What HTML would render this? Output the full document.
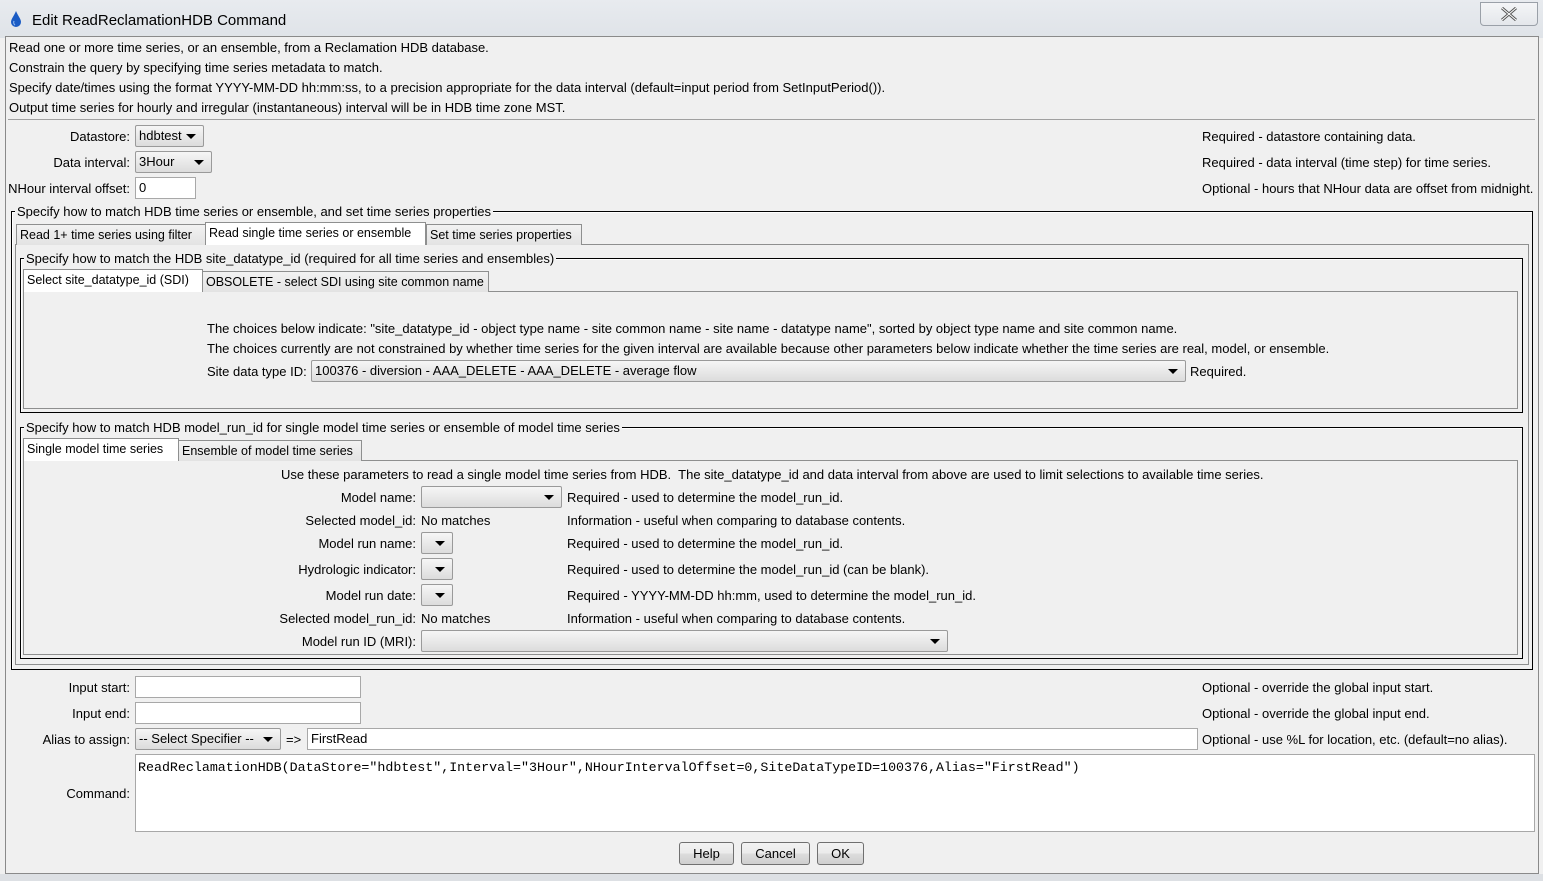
<!DOCTYPE html>
<html><head><meta charset="utf-8"><style>
*{box-sizing:border-box;margin:0;padding:0}
body{width:1543px;height:881px;overflow:hidden;background:#f0f0f0;font-family:"Liberation Sans",sans-serif;font-size:13px;color:#000;position:relative}
.a{position:absolute}
.t{position:absolute;white-space:nowrap;line-height:14px;margin-top:1px}
.r{text-align:right}
.cb{position:absolute;height:22px;border:1px solid #9a9a9a;border-radius:2px;background:linear-gradient(#f6f6f6,#dcdcdc);line-height:20px;padding-left:3px;white-space:nowrap}
.cb:after{content:"";position:absolute;right:7px;top:8px;border-left:5px solid transparent;border-right:5px solid transparent;border-top:5px solid #000}
.tf{position:absolute;height:22px;border:1px solid #a8a8a8;background:#fff;line-height:20px;padding-left:3px;white-space:nowrap}
.tab{position:absolute;height:21px;border:1px solid #8e8f8f;border-bottom:none;background:linear-gradient(#f2f2f2,#e3e3e3);line-height:21px;padding:0 3px;white-space:nowrap;font-size:12.5px;overflow:hidden}
.tab.s{background:#fff;height:23px;line-height:20px}
.grp{position:absolute;border:1px solid #000;box-shadow:inset 1px 1px 0 #fff}
.pan{position:absolute;border:1px solid #8e8f8f}
.lg{position:absolute;background:#f0f0f0;padding:0 2px;line-height:15px;white-space:nowrap}
.btn{position:absolute;height:23px;border:1px solid #707070;border-radius:3px;background:linear-gradient(#f2f2f2 0%,#ebebeb 50%,#dddddd 51%,#cfcfcf 100%);text-align:center;line-height:21px}
</style></head><body>
<div class="a" style="left:0;top:0;width:1543px;height:38px;background:linear-gradient(#e8ebef,#dfe3e8)"></div>
<svg class="a" style="left:9px;top:10px" width="14" height="18" viewBox="0 0 14 18"><path d="M7 1 C5 6 2 9 2 12 A5 5 0 0 0 12 12 C12 9 9 6 7 1Z" fill="#1a5bc4"/><path d="M5 11 A2.5 3 0 0 0 6 15" stroke="#8fb8f0" stroke-width="1.2" fill="none"/></svg>
<div class="t" style="left:32px;top:12px;font-size:15px;line-height:16px">Edit ReadReclamationHDB Command</div>
<div class="a" style="left:1480px;top:2px;width:58px;height:24px;border:1px solid #9aa0a8;border-radius:0 0 4px 4px;background:linear-gradient(#f4f5f7,#e4e7eb)"></div>
<svg class="a" style="left:1500px;top:7px" width="18" height="14" viewBox="0 0 18 14"><path d="M2 1 L16 13 M16 1 L2 13" stroke="#555" stroke-width="3"/><path d="M2 1 L16 13 M16 1 L2 13" stroke="#fff" stroke-width="1"/></svg>
<div class="a" style="left:5px;top:36px;width:1534px;height:838px;border:1px solid #8a8a8a;background:#f0f0f0"></div>
<div class="a" style="left:0;top:874px;width:1543px;height:7px;background:#dde0e4"></div>

<div class="t" style="left:9px;top:40px">Read one or more time series, or an ensemble, from a Reclamation HDB database.</div>
<div class="t" style="left:9px;top:60px">Constrain the query by specifying time series metadata to match.</div>
<div class="t" style="left:9px;top:80px">Specify date/times using the format YYYY-MM-DD hh:mm:ss, to a precision appropriate for the data interval (default=input period from SetInputPeriod()).</div>
<div class="t" style="left:9px;top:100px">Output time series for hourly and irregular (instantaneous) interval will be in HDB time zone MST.</div>
<div class="a" style="left:8px;top:119px;width:1527px;height:1px;background:#a0a0a0"></div>

<div class="t r" style="left:0;width:130px;top:129px">Datastore:</div>
<div class="cb" style="left:135px;top:125px;width:69px">hdbtest</div>
<div class="t r" style="left:0;width:130px;top:155px">Data interval:</div>
<div class="cb" style="left:135px;top:151px;width:77px">3Hour</div>
<div class="t r" style="left:0;width:130px;top:181px">NHour interval offset:</div>
<div class="tf" style="left:135px;top:177px;width:61px">0</div>
<div class="t" style="left:1202px;top:129px">Required - datastore containing data.</div>
<div class="t" style="left:1202px;top:155px">Required - data interval (time step) for time series.</div>
<div class="t" style="left:1202px;top:181px">Optional - hours that NHour data are offset from midnight.</div>

<div class="grp" style="left:11px;top:211px;width:1522px;height:459px"></div>
<div class="lg" style="left:15px;top:204px">Specify how to match HDB time series or ensemble, and set time series properties</div>
<div class="pan" style="left:15px;top:244px;width:1514px;height:421px"></div>
<div class="tab" style="left:16px;top:224px;width:190px">Read 1+ time series using filter</div>
<div class="tab" style="left:426px;top:224px;width:156px">Set time series properties</div>
<div class="tab s" style="left:205px;top:222px;width:221px">Read single time series or ensemble</div>

<div class="grp" style="left:20px;top:258px;width:1503px;height:155px"></div>
<div class="lg" style="left:24px;top:251px">Specify how to match the HDB site_datatype_id (required for all time series and ensembles)</div>
<div class="pan" style="left:23px;top:291px;width:1495px;height:118px"></div>
<div class="tab" style="left:202px;top:271px;width:287px">OBSOLETE - select SDI using site common name</div>
<div class="tab s" style="left:23px;top:269px;width:180px">Select site_datatype_id (SDI)</div>
<div class="t" style="left:207px;top:321px">The choices below indicate: "site_datatype_id - object type name - site common name - site name - datatype name", sorted by object type name and site common name.</div>
<div class="t" style="left:207px;top:341px">The choices currently are not constrained by whether time series for the given interval are available because other parameters below indicate whether the time series are real, model, or ensemble.</div>
<div class="t" style="left:207px;top:364px">Site data type ID:</div>
<div class="cb" style="left:311px;top:360px;width:875px">100376 - diversion - AAA_DELETE - AAA_DELETE - average flow</div>
<div class="t" style="left:1190px;top:364px">Required.</div>

<div class="grp" style="left:20px;top:427px;width:1503px;height:232px"></div>
<div class="lg" style="left:24px;top:420px">Specify how to match HDB model_run_id for single model time series or ensemble of model time series</div>
<div class="pan" style="left:23px;top:460px;width:1495px;height:195px"></div>
<div class="tab" style="left:178px;top:440px;width:184px">Ensemble of model time series</div>
<div class="tab s" style="left:23px;top:438px;width:156px">Single model time series</div>
<div class="t" style="left:281px;top:467px">Use these parameters to read a single model time series from HDB.&nbsp; The site_datatype_id and data interval from above are used to limit selections to available time series.</div>
<div class="t r" style="left:200px;width:216px;top:490px">Model name:</div>
<div class="cb" style="left:421px;top:486px;width:141px"></div>
<div class="t r" style="left:200px;width:216px;top:513px">Selected model_id:</div>
<div class="t" style="left:421px;top:513px">No matches</div>
<div class="t r" style="left:200px;width:216px;top:536px">Model run name:</div>
<div class="cb" style="left:421px;top:532px;width:32px"></div>
<div class="t r" style="left:200px;width:216px;top:562px">Hydrologic indicator:</div>
<div class="cb" style="left:421px;top:558px;width:32px"></div>
<div class="t r" style="left:200px;width:216px;top:588px">Model run date:</div>
<div class="cb" style="left:421px;top:584px;width:32px"></div>
<div class="t r" style="left:200px;width:216px;top:611px">Selected model_run_id:</div>
<div class="t" style="left:421px;top:611px">No matches</div>
<div class="t r" style="left:200px;width:216px;top:634px">Model run ID (MRI):</div>
<div class="cb" style="left:421px;top:630px;width:527px"></div>
<div class="t" style="left:567px;top:490px">Required - used to determine the model_run_id.</div>
<div class="t" style="left:567px;top:513px">Information - useful when comparing to database contents.</div>
<div class="t" style="left:567px;top:536px">Required - used to determine the model_run_id.</div>
<div class="t" style="left:567px;top:562px">Required - used to determine the model_run_id (can be blank).</div>
<div class="t" style="left:567px;top:588px">Required - YYYY-MM-DD hh:mm, used to determine the model_run_id.</div>
<div class="t" style="left:567px;top:611px">Information - useful when comparing to database contents.</div>

<div class="t r" style="left:0;width:130px;top:680px">Input start:</div>
<div class="tf" style="left:135px;top:676px;width:226px"></div>
<div class="t r" style="left:0;width:130px;top:706px">Input end:</div>
<div class="tf" style="left:135px;top:702px;width:226px"></div>
<div class="t r" style="left:0;width:130px;top:732px">Alias to assign:</div>
<div class="cb" style="left:135px;top:728px;width:146px">-- Select Specifier --</div>
<div class="t" style="left:286px;top:732px">=&gt;</div>
<div class="tf" style="left:307px;top:728px;width:891px">FirstRead</div>
<div class="t" style="left:1202px;top:680px">Optional - override the global input start.</div>
<div class="t" style="left:1202px;top:706px">Optional - override the global input end.</div>
<div class="t" style="left:1202px;top:732px">Optional - use %L for location, etc. (default=no alias).</div>
<div class="t r" style="left:0;width:130px;top:786px">Command:</div>
<div class="a" style="left:135px;top:754px;width:1400px;height:78px;border:1px solid #a8a8a8;background:#fff"></div>
<div class="t" style="left:138px;top:760px;font-family:'Liberation Mono',monospace;font-size:13.3px">ReadReclamationHDB(DataStore="hdbtest",Interval="3Hour",NHourIntervalOffset=0,SiteDataTypeID=100376,Alias="FirstRead")</div>
<div class="btn" style="left:679px;top:842px;width:55px">Help</div>
<div class="btn" style="left:741px;top:842px;width:69px">Cancel</div>
<div class="btn" style="left:817px;top:842px;width:47px">OK</div>
</body></html>
